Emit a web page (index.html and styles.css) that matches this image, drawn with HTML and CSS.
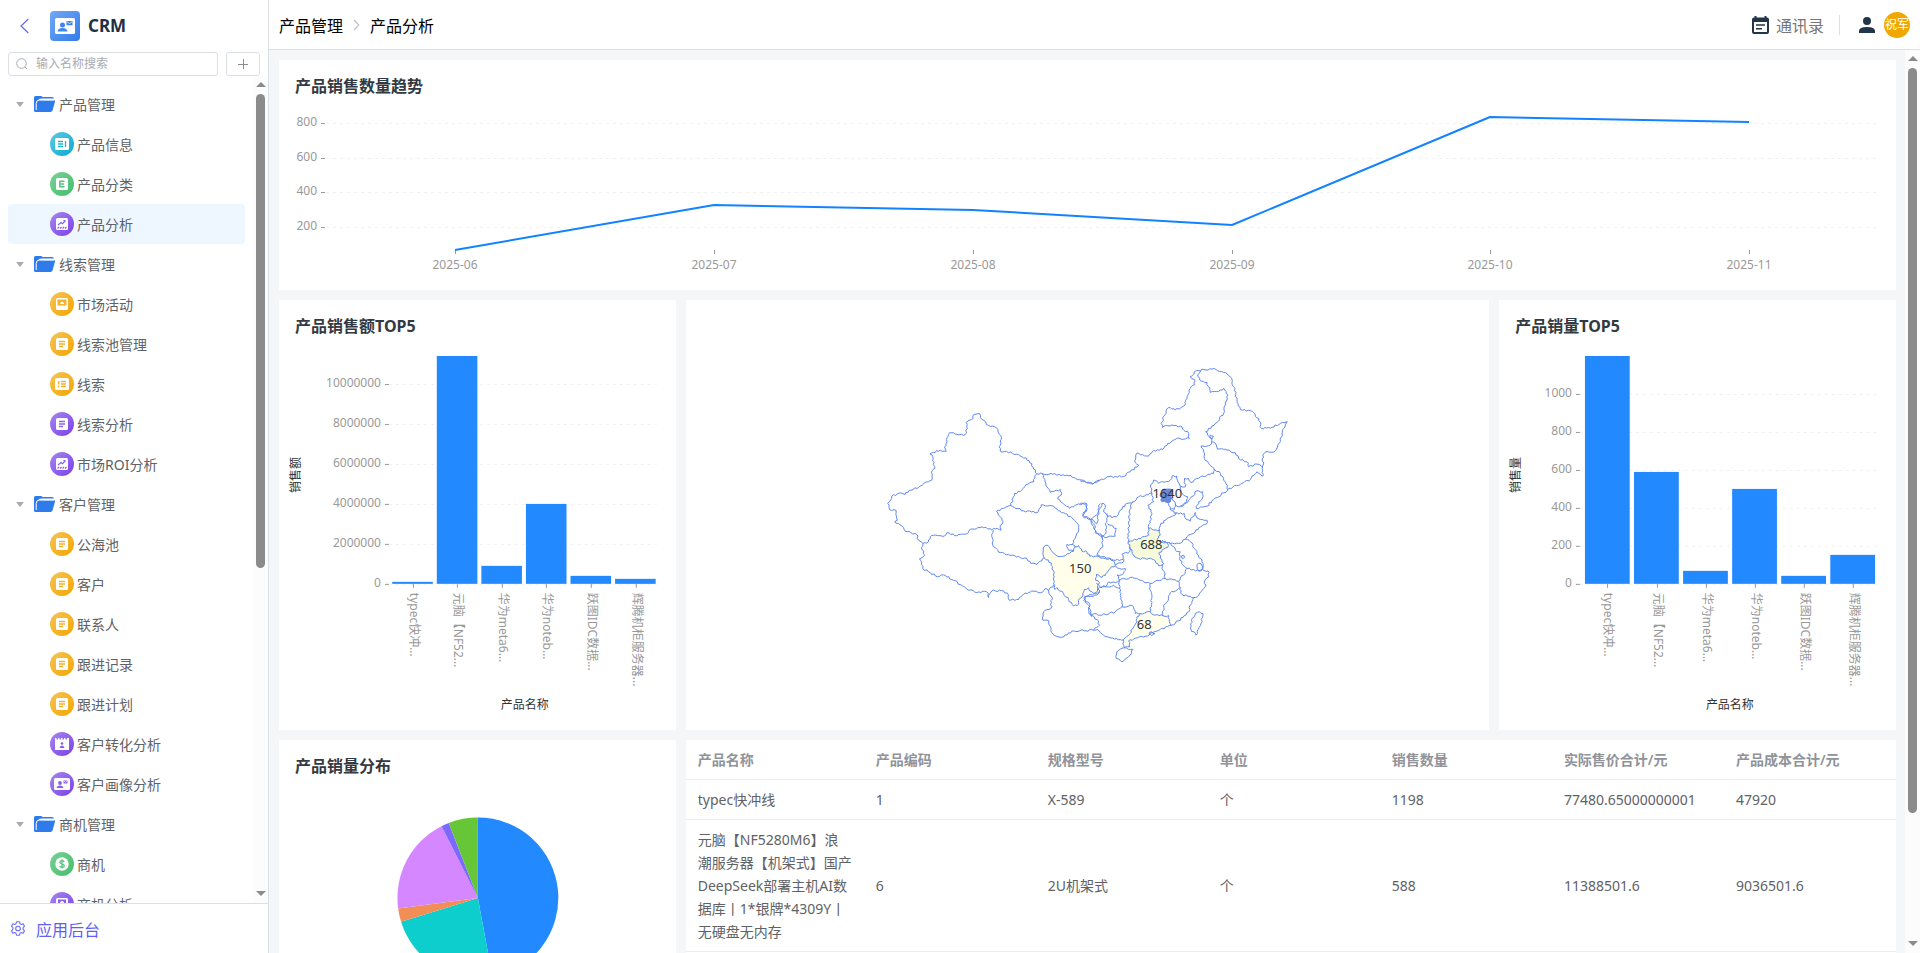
FILE: index.html
```html
<!DOCTYPE html>
<html lang="zh-CN">
<head>
<meta charset="utf-8">
<meta name="viewport" content="width=device-width, initial-scale=1">
<title>CRM - 产品分析</title>
<link rel="stylesheet" href="styles.css">
</head>
<body>
<svg class="sprite" aria-hidden="true">
  <defs>
    <linearGradient id="cyan" x1="0" y1="0" x2="1" y2="1"><stop offset="0" stop-color="#5ccbe2"/><stop offset="1" stop-color="#0aa9d0"/></linearGradient>
    <linearGradient id="green" x1="0" y1="0" x2="1" y2="1"><stop offset="0" stop-color="#7bd196"/><stop offset="1" stop-color="#43bd6c"/></linearGradient>
    <linearGradient id="purple" x1="0" y1="0" x2="1" y2="1"><stop offset="0" stop-color="#a886ee"/><stop offset="1" stop-color="#7a3fea"/></linearGradient>
    <linearGradient id="amber" x1="0" y1="0" x2="1" y2="1"><stop offset="0" stop-color="#f7c456"/><stop offset="1" stop-color="#f2a600"/></linearGradient>
    <linearGradient id="blue" x1="0" y1="0" x2="1" y2="1"><stop offset="0" stop-color="#74a8f3"/><stop offset="1" stop-color="#2f7cec"/></linearGradient>
  </defs>
  <symbol id="folder" viewBox="0 0 21 16"><path fill="#2e7cec" d="M0 1.5Q0 0 1.5 0H7q1 0 1.5 1H18q2 0 2 1.6H7.5Q4.5 2.6 3.9 5L1.8 12V7.6Q2 5 4 4.3H20q1.300 0 1 1.300L18.600 14.300Q18 16 16.500 16H1.500Q0 16 0 14.500Z"/><path fill="none" stroke="#fff" stroke-width="1" d="M2.200 14V7.500Q2.300 4 5.500 4H20"/></symbol>
  <symbol id="i-info" viewBox="0 0 24 24"><circle cx="12" cy="12" r="12" fill="url(#cyan)"/><rect x="5" y="6" width="14" height="12" rx="1.500" fill="#fff"/><path stroke="#23b3d5" stroke-width="1.300" d="M8 9.500h5M8 12h5M8 14.500h5M15.500 9v6"/></symbol>
  <symbol id="i-cat" viewBox="0 0 24 24"><circle cx="12" cy="12" r="12" fill="url(#green)"/><rect x="6" y="6" width="12" height="12" rx="1.500" fill="#fff"/><path fill="none" stroke="#55c37a" stroke-width="1.400" d="M14.500 9.200H9.800v5.600h4.700M9.800 12h4.200"/></symbol>
  <symbol id="i-chart" viewBox="0 0 24 24"><circle cx="12" cy="12" r="12" fill="url(#purple)"/><rect x="6" y="6" width="12" height="12" rx="1.500" fill="#fff"/><path fill="none" stroke="#8c5cec" stroke-width="1.200" d="M8 13l3-2.500 1.500 1.200L15.500 8.500M13.500 8.500h2M7.500 16.500l1.500-1.500M10 16.500l1.500-1.500M12.500 16.500l1.500-1.500M15 16.500l1.500-1.500"/></symbol>
  <symbol id="i-market" viewBox="0 0 24 24"><circle cx="12" cy="12" r="12" fill="url(#amber)"/><rect x="6" y="6" width="12" height="12" rx="1.500" fill="#fff"/><rect x="7.500" y="7.500" width="9" height="6" fill="#f4b32a"/><path fill="#fff" d="M10 12q0-2 2-2.500 2 .5 2 2.500z"/></symbol>
  <symbol id="i-doc" viewBox="0 0 24 24"><circle cx="12" cy="12" r="12" fill="url(#amber)"/><rect x="6" y="6" width="12" height="12" rx="1.500" fill="#fff"/><path stroke="#f4b32a" stroke-width="1.300" d="M9 9.500h6M9 12h6M9 14.500h4"/></symbol>
  <symbol id="i-docp" viewBox="0 0 24 24"><circle cx="12" cy="12" r="12" fill="url(#purple)"/><rect x="6" y="6" width="12" height="12" rx="1.500" fill="#fff"/><path stroke="#9063ec" stroke-width="1.300" d="M9 9.500h6M9 12h6M9 14.500h4"/></symbol>
  <symbol id="i-list" viewBox="0 0 24 24"><circle cx="12" cy="12" r="12" fill="url(#amber)"/><rect x="5" y="6" width="14" height="12" rx="1.500" fill="#fff"/><path stroke="#f4b32a" stroke-width="1.400" d="M8.700 9v3.500M8.700 13.700v1.500M11 9.500h5M11 12h5M11 14.500h5"/></symbol>
  <symbol id="i-convert" viewBox="0 0 24 24"><circle cx="12" cy="12" r="12" fill="url(#purple)"/><path fill="#fff" d="M5 6h1.500v1.500h1.500V6h1.500v1.500H11V6h1.500v1.500H14V6h1.500v1.500H17V6h2v12H5z"/><circle cx="12" cy="11.500" r="1.300" fill="#8c5cec"/><path fill="#8c5cec" d="M9.500 16q.5-2.500 2.500-2.500t2.500 2.500z"/></symbol>
  <symbol id="i-portrait" viewBox="0 0 24 24"><circle cx="12" cy="12" r="12" fill="url(#purple)"/><rect x="4" y="6" width="16" height="12" rx="1.500" fill="#fff"/><circle cx="10" cy="11" r="1.900" fill="#8c5cec"/><path fill="#8c5cec" d="M6.500 16q.5-2.500 3.500-2.500t3.500 2.500z"/><path fill="#8c5cec" d="M13.500 8.500h4v3h-4z"/><path stroke="#fff" stroke-width=".6" fill="none" d="M13.800 9l1.700 1.200L17.200 9"/></symbol>
  <symbol id="i-money" viewBox="0 0 24 24"><circle cx="12" cy="12" r="12" fill="url(#green)"/><circle cx="12" cy="12" r="6.700" fill="#fff"/><path fill="none" stroke="#55c37a" stroke-width="1.300" d="M14.200 10q-.3-1.400-2.200-1.400t-2.200 1.500q0 1.300 2.200 1.800t2.200 1.900q0 1.600-2.200 1.600t-2.300-1.500M12 7.400v9.200"/></symbol>
  <symbol id="i-screen" viewBox="0 0 24 24"><circle cx="12" cy="12" r="12" fill="url(#purple)"/><rect x="6" y="6" width="12" height="12" rx="1.500" fill="#fff"/><path fill="#8c5cec" d="M8 7.500h8v8H8z"/><circle cx="12" cy="11" r="2" fill="#fff"/></symbol>
</svg>

<div class="app">
  <aside class="sidebar">
    <div class="brand">
      <button class="back" aria-label="返回"><svg width="9" height="16" viewBox="0 0 9 16"><path fill="none" stroke="#6b6cf5" stroke-width="1.300" d="M8.300 1L1 8l7.300 7"/></svg></button>
      <svg class="logo" viewBox="0 0 30 30" aria-hidden="true"><rect width="30" height="30" rx="4" fill="url(#blue)"/><rect x="5" y="7" width="20" height="16" rx="1.500" fill="#fff"/><circle cx="12.500" cy="14" r="2.500" fill="#3f85ee"/><path fill="#3f85ee" d="M7.500 20.500q.5-3.500 5-3.500t5 3.500z"/><path fill="#3f85ee" d="M16.500 10h6v4.300h-6z"/><path fill="none" stroke="#fff" stroke-width=".7" d="M17 10.800l2.500 1.700 2.500-1.700"/></svg>
      <strong class="brand-name">CRM</strong>
    </div>
    <div class="tools">
      <label class="search">
        <svg width="12" height="12" viewBox="0 0 12 12" aria-hidden="true"><circle cx="5.500" cy="5.500" r="4.800" fill="none" stroke="#a8abb2"/><path stroke="#a8abb2" d="M9 9l2 2"/></svg>
        <input type="text" placeholder="输入名称搜索" aria-label="输入名称搜索">
      </label>
      <button class="add" aria-label="新增"><svg width="10" height="10" viewBox="0 0 10 10"><path stroke="#8b8e95" d="M0 5.500h10M5.500 0v10"/></svg></button>
    </div>
    <div class="nav-wrap">
      <nav class="nav">
        <button class="group"><i class="caret"></i><svg class="folder"><use href="#folder"/></svg>产品管理</button>
        <a class="item" href="#"><svg><use href="#i-info"/></svg>产品信息</a>
        <a class="item" href="#"><svg><use href="#i-cat"/></svg>产品分类</a>
        <a class="item active" href="#" aria-current="page"><svg><use href="#i-chart"/></svg>产品分析</a>
        <button class="group"><i class="caret"></i><svg class="folder"><use href="#folder"/></svg>线索管理</button>
        <a class="item" href="#"><svg><use href="#i-market"/></svg>市场活动</a>
        <a class="item" href="#"><svg><use href="#i-doc"/></svg>线索池管理</a>
        <a class="item" href="#"><svg><use href="#i-list"/></svg>线索</a>
        <a class="item" href="#"><svg><use href="#i-docp"/></svg>线索分析</a>
        <a class="item" href="#"><svg><use href="#i-chart"/></svg>市场ROI分析</a>
        <button class="group"><i class="caret"></i><svg class="folder"><use href="#folder"/></svg>客户管理</button>
        <a class="item" href="#"><svg><use href="#i-doc"/></svg>公海池</a>
        <a class="item" href="#"><svg><use href="#i-doc"/></svg>客户</a>
        <a class="item" href="#"><svg><use href="#i-doc"/></svg>联系人</a>
        <a class="item" href="#"><svg><use href="#i-doc"/></svg>跟进记录</a>
        <a class="item" href="#"><svg><use href="#i-doc"/></svg>跟进计划</a>
        <a class="item" href="#"><svg><use href="#i-convert"/></svg>客户转化分析</a>
        <a class="item" href="#"><svg><use href="#i-portrait"/></svg>客户画像分析</a>
        <button class="group"><i class="caret"></i><svg class="folder"><use href="#folder"/></svg>商机管理</button>
        <a class="item" href="#"><svg><use href="#i-money"/></svg>商机</a>
        <a class="item" href="#"><svg><use href="#i-screen"/></svg>商机分析</a>
      </nav>
      <div class="scrollbar" aria-hidden="true"><i class="up"></i><div class="rail"><b class="thumb thumb-nav"></b></div><i class="down"></i></div>
    </div>
    <a class="backend" href="#">
      <svg width="14" height="15" viewBox="0 0 14 15" aria-hidden="true"><path fill="none" stroke="#6b6cf5" stroke-width="1.100" stroke-linejoin="round" d="M5.500.8h3l.5 1.900 1.300.7 1.900-.6 1.300 2.400-1.400 1.400v1.800l1.400 1.400-1.300 2.400-1.900-.6-1.300.7-.5 1.900h-3L5 12.300l-1.300-.7-1.900.6L.5 9.800l1.400-1.400V6.600L.5 5.200l1.300-2.400 1.900.6L5 2.700z"/><circle cx="7" cy="7.500" r="2.300" fill="none" stroke="#6b6cf5" stroke-width="1.100"/></svg>
      应用后台
    </a>
  </aside>

  <div class="page">
    <header class="topbar">
      <nav class="crumbs" aria-label="面包屑">
        <a href="#">产品管理</a>
        <svg width="7" height="12" viewBox="0 0 7 12" aria-hidden="true"><path fill="none" stroke="#bfc3cb" stroke-width="1.200" d="M1 1l4.800 5L1 11"/></svg>
        <span>产品分析</span>
      </nav>
      <div class="user">
        <a class="contacts" href="#"><svg width="17" height="18" viewBox="0 0 17 18" aria-hidden="true"><path fill="#233549" d="M2.500 0h2v1.500h8V0h2v1.500h.5q2 0 2 2V16q0 2-2 2H2q-2 0-2-2V3.500q0-2 2-2h.5z"/><path fill="#fff" d="M2 6h13v10H2z"/><path stroke="#233549" stroke-width="1.500" d="M4 9h9M4 12.700h6"/></svg>通讯录</a>
        <span class="divider"></span>
        <svg width="16" height="16" viewBox="0 0 16 16" aria-hidden="true"><circle cx="8" cy="4" r="4" fill="#233549"/><path fill="#233549" d="M0 16v-2q0-4 8-4t8 4v2z"/></svg>
        <button class="avatar">祝军</button>
      </div>
    </header>
    <div class="body">
      <main class="board">
        <section class="card wide"><h2>产品销售数量趋势</h2><svg id="trend" viewBox="0 50 1617 180" role="img" aria-label="产品销售数量趋势"></svg></section>
        <section class="card side"><h2>产品销售额TOP5</h2><svg id="amount" viewBox="0 50 397 380" role="img" aria-label="产品销售额TOP5"></svg></section>
        <section class="card middle"><svg id="map" viewBox="686 300 803 430" role="img" aria-label="销售地区分布"></svg></section>
        <section class="card side"><h2>产品销量TOP5</h2><svg id="count" viewBox="0 50 397 380" role="img" aria-label="产品销量TOP5"></svg></section>
        <section class="card side"><h2>产品销量分布</h2><svg id="pie" viewBox="0 50 397 380" role="img" aria-label="产品销量分布"></svg></section>
        <section class="card rest">
          <table>
            <colgroup><col class="first"><col span="6"></colgroup>
            <thead><tr><th>产品名称</th><th>产品编码</th><th>规格型号</th><th>单位</th><th>销售数量</th><th>实际售价合计/元</th><th>产品成本合计/元</th></tr></thead>
            <tbody>
              <tr><td>typec快冲线</td><td>1</td><td>X-589</td><td>个</td><td>1198</td><td>77480.65000000001</td><td>47920</td></tr>
              <tr><td>元脑【NF5280M6】浪潮服务器【机架式】国产DeepSeek部署主机AI数据库丨1*银牌*4309Y丨无硬盘无内存</td><td>6</td><td>2U机架式</td><td>个</td><td>588</td><td>11388501.6</td><td>9036501.6</td></tr>
            </tbody>
          </table>
        </section>
      </main>
      <div class="scrollbar" aria-hidden="true"><i class="up"></i><div class="rail"><b class="thumb thumb-page"></b></div><i class="down"></i></div>
    </div>
  </div>
</div>
<script src="charts.js"></script>
</body>
</html>
```
FILE: styles.css
```css
* { box-sizing: border-box; }
body {
  margin: 0;
  font-family: "Noto Sans", "Noto Sans CJK SC", sans-serif;
  font-size: 14px;
  color: #606266;
}
a { color: inherit; text-decoration: none; }
button { font: inherit; color: inherit; border: 0; background: none; padding: 0; margin: 0; cursor: pointer; }
.sprite { position: absolute; width: 0; height: 0; }

.app { display: flex; height: 100vh; overflow: hidden; }

/* sidebar */
.sidebar {
  flex: none;
  width: 269px;
  display: flex;
  flex-direction: column;
  border-right: 1px solid #dcdfe6;
  background: #fff;
}
.brand { display: flex; align-items: center; height: 52px; padding-left: 20px; }
.back { display: flex; width: 30px; }
.logo { width: 30px; height: 30px; }
.brand-name { margin-left: 8px; font-size: 17px; line-height: 24px; color: #1f3043; }
.tools { display: flex; gap: 8px; padding: 0 8px; }
.search {
  flex: 1;
  display: flex;
  align-items: center;
  gap: 8px;
  height: 24px;
  padding: 0 7px;
  border: 1px solid #dcdfe6;
  border-radius: 3px;
}
.search input {
  flex: 1;
  min-width: 0;
  border: 0;
  padding: 0;
  outline: 0;
  font: inherit;
  font-size: 12px;
  line-height: 20px;
}
.search input::placeholder { color: #a8abb2; }
.add {
  width: 36px;
  height: 24px;
  display: flex;
  align-items: center;
  justify-content: center;
  border: 1px solid #dcdfe6;
  border-radius: 3px;
}
.nav-wrap { flex: 1; min-height: 0; display: flex; }
.nav {
  flex: 1;
  display: flex;
  flex-direction: column;
  padding: 8px 8px 0;
  overflow: auto;
  scrollbar-width: none;
}
.group, .item { flex: none; display: flex; align-items: center; height: 40px; }
.group { padding-left: 8px; text-align: left; }
.caret {
  border: 4px solid transparent;
  border-top: 5px solid #a8abb2;
  border-bottom: 0;
}
.folder { width: 21px; height: 16px; margin: 0 4px 0 10px; }
.item { padding-left: 42px; gap: 3px; border-radius: 4px; }
.item svg { width: 24px; height: 24px; }
.item.active { background: #eef6ff; }
.backend {
  display: flex;
  align-items: center;
  gap: 11px;
  height: 50px;
  padding-left: 11px;
  border-top: 1px solid #dcdfe6;
  font-size: 16px;
  color: #5f61f2;
}

/* scrollbars */
.scrollbar {
  flex: none;
  width: 15px;
  display: flex;
  flex-direction: column;
  align-items: center;
  padding: 6px 0 7px;
  background: #fcfcfc;
}
.up, .down { border: 5px solid transparent; }
.up { border-top: 0; border-bottom-color: #8b8b8b; }
.down { border-bottom: 0; border-top-color: #8b8b8b; }
.rail { flex: 1; padding: 7px 0; }
.thumb { display: block; width: 9px; border-radius: 5px; background: #8b8b8b; }
.thumb-nav { height: 60%; }
.thumb-page { height: 86%; }

/* page */
.page { flex: 1; min-width: 0; display: flex; flex-direction: column; background: #f4f6f8; }
.topbar {
  flex: none;
  display: flex;
  align-items: center;
  justify-content: space-between;
  height: 50px;
  padding: 0 10px;
  border-bottom: 1px solid #dcdfe6;
  background: #fff;
  font-size: 16px;
}
.crumbs { display: flex; align-items: center; gap: 10px; color: #000; }
.user { display: flex; align-items: center; gap: 9px; }
.contacts { display: flex; align-items: center; gap: 7px; color: #777; }
.divider { width: 1px; height: 20px; margin: 0 10px 0 6px; background: #dcdfe6; }
.avatar { width: 26px; height: 26px; border-radius: 13px; background: #f0a800; color: #fff; font-size: 12px; line-height: 24px; white-space: nowrap; }
.body { flex: 1; min-height: 0; display: flex; }
.board {
  flex: 1;
  min-width: 0;
  display: grid;
  grid-template-columns: repeat(24, minmax(0, 1fr));
  align-content: start;
  gap: 10px;
  padding: 10px 9px 10px 10px;
  overflow: auto;
  scrollbar-width: none;
}
.card { background: #fff; min-width: 0; }
.wide { grid-column: span 24; }
.side { grid-column: span 6; }
.middle { grid-column: span 12; }
.rest { grid-column: span 18; }
.card h2 { margin: 0; padding: 14px 16px 12px; font-size: 16px; line-height: 24px; font-weight: 700; color: #333941; }
.card > svg { display: block; width: 100%; height: auto; }

/* chart text */
.tick { font-size: 12px; fill: #999; }
.axis-name { font-size: 12px; fill: #333; text-anchor: middle; }
.end { text-anchor: end; }
.mid { text-anchor: middle; }
.grid-line { stroke: #f0f0f0; stroke-dasharray: 3 4; }
.tick-line { stroke: #999; }
.series { fill: none; stroke: #1283ff; stroke-width: 2; stroke-linejoin: round; }
.bar { fill: #2389ff; }
.border-line { fill: none; stroke: #5c87f0; vector-effect: non-scaling-stroke; }
.map-label { font-size: 13px; fill: #333; text-anchor: middle; }

/* table */
table { width: 100%; table-layout: fixed; border-collapse: collapse; line-height: 23px; }
.first { width: 178px; }
th, td { padding: 8px 12px; text-align: left; border-bottom: 1px solid #ebeef5; overflow-wrap: break-word; }
th { color: #909399; font-weight: 600; }
```
FILE: charts.js
```js
const NS = 'http://www.w3.org/2000/svg';
function add(parent, tag, attrs, text) {
  const el = document.createElementNS(NS, tag);
  for (const key in attrs) el.setAttribute(key, attrs[key]);
  if (text !== undefined) el.textContent = text;
  parent.appendChild(el);
  return el;
}

/* sales trend */
(function () {
  const svg = document.getElementById('trend');
  [[800, 63], [600, 98], [400, 132], [200, 167]].forEach(([v, y]) => {
    add(svg, 'text', { class: 'tick end', x: 38, y: y + 3 }, v);
    add(svg, 'path', { class: 'tick-line', d: `M42 ${y}.5h4` });
    add(svg, 'path', { class: 'grid-line', d: `M47 ${y}.5H1597` });
  });
  const points = [['2025-06', 176, 190], ['2025-07', 435, 145], ['2025-08', 694, 150], ['2025-09', 953, 165], ['2025-10', 1211, 57], ['2025-11', 1470, 62]];
  points.forEach(([name, x]) => {
    add(svg, 'path', { class: 'tick-line', d: `M${x}.5 190v4` });
    add(svg, 'text', { class: 'tick mid', x: x, y: 209 }, name);
  });
  add(svg, 'path', { class: 'series', d: 'M' + points.map(p => p[1] + ' ' + p[2]).join('L') });
})();

/* bar charts */
const names = ['typec快冲...', '元脑【NF52...', '华为meta6...', '华为noteb...', '跃图IDC数据...', '辉腾机柜服务器...'];
function bars(id, o) {
  const svg = document.getElementById(id);
  const base = 284;
  for (let i = 0; i <= o.steps; i++) {
    const y = base - i * o.gap;
    add(svg, 'text', { class: 'tick end', x: o.left - 8, y: y + 3 }, i * o.unit);
    add(svg, 'path', { class: 'tick-line', d: `M${o.left - 4} ${y}.5h4` });
    add(svg, 'path', { class: 'grid-line', d: `M${o.left} ${y}.5H378` });
  }
  o.values.forEach((v, i) => {
    const cx = o.first + i * o.band;
    const h = Math.round(v / o.unit * o.gap);
    add(svg, 'rect', { class: 'bar', x: cx - o.width / 2, y: base - h, width: o.width, height: h });
    add(svg, 'path', { class: 'tick-line', d: `M${Math.round(cx)}.5 ${base}v4` });
    add(svg, 'text', { class: 'tick', transform: `translate(${Math.round(cx) - 3} 293) rotate(90)` }, names[i]);
  });
  add(svg, 'text', { class: 'axis-name', x: o.nameX, y: 409 }, '产品名称');
  add(svg, 'text', { class: 'axis-name', transform: 'translate(21 175) rotate(-90)' }, o.label);
}
bars('amount', { steps: 5, unit: 2000000, gap: 40, left: 110, first: 133.6, band: 44.6, width: 40.6, nameX: 246, label: '销售额', values: [77480, 11388501, 900000, 4000000, 400000, 250000] });
bars('count', { steps: 5, unit: 200, gap: 38, left: 81, first: 108.4, band: 49.1, width: 44.8, nameX: 231, label: '销售量', values: [1198, 588, 68, 500, 40, 150] });

/* share of sales */
(function () {
  const svg = document.getElementById('pie');
  const data = [[1198, '#2389ff'], [588, '#0dcdcd'], [68, '#f18e56'], [500, '#d487ff'], [40, '#7c69ff'], [150, '#67c638']];
  const total = data.reduce((s, d) => s + d[0], 0);
  let a = -Math.PI / 2;
  const at = t => `${(199 + 80.5 * Math.cos(t)).toFixed(2)} ${(158 + 80.5 * Math.sin(t)).toFixed(2)}`;
  data.forEach(([v, fill]) => {
    const b = a + v / total * Math.PI * 2;
    add(svg, 'path', { fill, d: `M199 158L${at(a)}A80.5 80.5 0 0 1 ${at(b)}Z` });
    a = b;
  });
})();

/* sales map: west and east halves, three units per pixel */
function rough(text, closed) {
  const pts = text.split(' ').map(p => p.split(',').map(Number));
  if (closed) pts.push(pts[0]);
  let d = 'M' + pts[0];
  for (let i = 1; i < pts.length; i++) {
    let a = pts[i - 1], b = pts[i];
    const len = Math.hypot(b[0] - a[0], b[1] - a[1]);
    const n = Math.max(1, Math.round(len / 6));
    for (let k = 1; k < n; k++) {
      const x = a[0] + (b[0] - a[0]) * k / n, y = a[1] + (b[1] - a[1]) * k / n;
      const s = Math.sin(Math.round(x) * 12.9 + Math.round(y) * 78.2) * 2.6;
      d += `L${(x + s * (b[1] - a[1]) / len).toFixed(1)},${(y - s * (b[0] - a[0]) / len).toFixed(1)}`;
    }
    d += 'L' + b;
  }
  return d + (closed ? 'Z' : '');
}
(function () {
  const svg = document.getElementById('map');
  const west = add(svg, 'g', { transform: 'translate(860 350) scale(.33333)' });
  const east = add(svg, 'g', { transform: 'translate(1080 350) scale(.33333)' });
  const line = (g, t) => add(g, 'path', { class: 'border-line', d: rough(t) });
  const area = (g, t, fill) => add(g, 'path', { class: 'border-line', style: 'fill:' + fill, d: rough(t, true) });

  area(west, '552,623 549,600 553,588 563,586 575,603 590,617 610,618 628,610 640,603 645,590 655,586 665,603 680,605 688,618 710,618 735,625 760,632 765,645 750,655 740,668 735,676 720,680 708,673 706,690 718,698 712,710 718,725 710,730 695,725 685,713 672,718 668,735 658,745 655,762 640,768 625,748 610,730 590,712 584,718 580,700 582,680 577,650 565,630', '#ffffec');
  line(west, '353,191 341,193 339,205 319,217 319,248 310,256 290,253 268,248 258,280 253,291 258,304 240,300 209,312 218,320 224,355 214,368 215,390 190,402 160,418 147,421 135,433 122,428 95,438 90,452 83,460 88,478 108,481 112,510 104,514 130,532 135,543 170,553 175,570 188,580 205,575 214,556 248,559 260,548 290,557 325,547 332,537 365,530 395,539 405,536 423,540 420,526 429,515 420,500 409,483 430,475 452,466 463,430 480,424 497,404 521,395 524,377 530,371 507,332 475,313 420,303 417,290 424,262 410,234 385,226 365,208 359,191 353,191');
  line(west, '530,371 548,371 620,375 632,376 645,384 665,390 698,402 720,390');
  line(west, '188,580 184,592 194,615 178,626 188,655 232,680 250,674 280,690 300,703 320,717 350,727 380,725 385,742 395,722 430,722 445,735 447,750 475,748 490,733 515,722 540,728 555,715 565,722 580,704');
  line(west, '399,540 395,560 400,590 415,606 450,616 500,625 512,640 530,643 545,632 552,623');
  line(west, '452,466 490,482 530,488 543,464 575,467 600,483 635,503 652,520 655,545 640,570 636,583 645,592');
  line(west, '636,583 620,583 625,600 640,603');
  line(west, '546,371 557,405 570,427 600,418 603,435 592,446 628,475 645,465 678,460 680,478 668,492 672,503 690,508 703,525 705,548 722,558 727,566');
  line(west, '690,508 712,490 715,467 720,460');
  line(west, '565,722 575,740 572,775 550,785 548,810 566,812 572,842 588,858 610,860 625,848 640,842 660,841');
  line(west, '718,725 710,735 680,738 670,750 688,768 686,790 695,800');

  area(east, '205,535 238,540 240,555 230,567 245,575 262,580 262,592 245,600 236,612 250,640 235,647 225,632 205,625 175,625 160,615 148,590 144,575 175,565 205,555', '#f4fadb');
  area(east, '130,868 150,850 152,840 170,815 170,800 180,790 210,785 225,795 248,797 265,796 272,825 240,838 215,848 195,858 160,866 145,872 148,890 132,892 128,880', '#ffffec');
  area(east, '240,432 246,420 262,417 276,420 272,435 276,445 265,457 245,455', '#6b88d4');
  line(east, '0,393 37,402 80,380 130,379 150,365 175,345 163,333 170,309 205,318 220,301 248,298 262,280 288,266 327,265 325,250 300,228 262,227 246,232 242,220 264,173 285,180 315,164 320,145 330,115 343,104 342,88 330,80 348,62 400,55 430,67 450,80 460,110 470,150 480,178 510,182 535,205 543,235 570,234 600,220 620,214 610,235 600,275 580,306 560,304 547,315 548,345 547,378 530,365 515,378 510,388 480,403 462,406 442,420 430,428 400,448 380,468 348,475 355,455 368,440 368,425 350,422 330,445 310,466 295,470 285,462');
  line(east, '0,460 18,460 20,475 8,495 30,507 50,520 55,480 65,460 75,465 70,485 95,503 108,500 120,480 140,460 158,455 175,440 215,430 210,405 220,390 235,400 270,390 275,378 290,378 293,395 300,408 315,410 312,385 325,385 332,397 360,380 400,370 400,355 385,340 372,325 370,305 362,288 390,285 395,270 376,245 410,217 430,190 435,165 443,135 430,115 415,125 390,127 380,97 358,90 352,75 362,62');
  line(east, '30,507 45,540 65,558 78,545 75,520 82,500 80,490');
  line(east, '82,520 108,535 105,558 80,562 65,558 68,590 50,615 100,630 128,628');
  line(east, '388,262 390,255 399,258 396,266 388,262');
  line(east, '395,275 408,285 412,297 440,300 465,308 475,325 500,335 505,350 530,342 548,352');
  line(east, '400,355 420,370 435,395 442,420');
  line(east, '215,430 220,455 203,465 215,490 205,535');
  line(east, '158,455 148,480 145,540 144,575');
  line(east, '238,540 240,525 260,505 288,490 270,478 265,465 268,455');
  line(east, '276,445 285,462 282,478 270,478');
  line(east, '300,408 305,430 322,440 320,455 300,467');
  line(east, '285,488 312,490 318,508 330,513 345,487 350,503 380,510 378,522 355,533 345,545 320,560 315,567 295,580 265,577 245,570');
  line(east, '315,567 330,575 345,598 350,612 360,625 368,640 368,660 383,662 385,680 372,695 375,710 355,735 340,742 330,765 325,785 295,812 272,825');
  line(east, '265,577 280,590 285,600 300,605 298,625 308,645 320,655 345,662 365,660');
  line(east, '303,618 310,615 313,622 306,626 303,618');
  line(east, '350,643 362,640 368,655 355,662 350,643');
  line(east, '250,640 245,655 252,665 255,685 295,693 303,678 315,670 320,655');
  line(east, '295,693 300,712 305,733 330,738 340,742');
  line(east, '148,590 148,605 125,612 130,635 105,645 118,655 135,655 130,670 110,675 118,690 150,682 180,690 210,700 230,690 255,685');
  line(east, '118,690 105,697 85,695 80,705 60,712 48,700');
  line(east, '118,690 118,715 122,730 125,770 155,765 165,790 180,790');
  line(east, '210,785 215,740 207,715 210,700');
  line(east, '300,712 270,728 265,745 250,765 248,797');
  line(east, '58,712 42,730 12,740 15,755 28,760 30,790 60,795 105,785 125,770');
  line(east, '118,715 100,705 80,710 60,712');
  line(east, '0,841 40,840 58,825 50,808 30,795');
  line(east, '40,840 52,838 70,855 120,868 130,868');
  line(east, '110,905 132,893 158,897 150,915 125,935 108,925 110,905');
  line(east, '358,785 368,790 362,820 347,855 332,838 335,805 345,790 358,785');
  line(east, '206,850 215,845 224,850 214,856 206,850');

  [['150', 1080, 573], ['688', 1151, 549], ['1640', 1167, 498], ['68', 1144, 629]].forEach(([t, x, y]) => {
    add(svg, 'text', { class: 'map-label', x: x, y: y }, t);
  });
})();
```
